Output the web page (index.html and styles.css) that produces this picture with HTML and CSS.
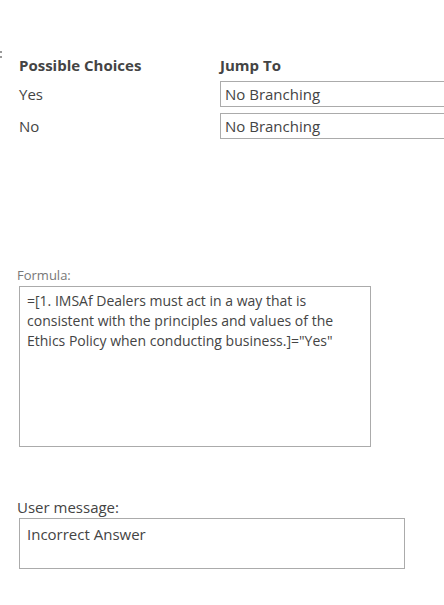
FILE: index.html
```html
<!DOCTYPE html>
<html>
<head>
<meta charset="utf-8">
<link rel="stylesheet" href="styles.css">
</head>
<body>
<div class="page">
  <span class="cut"></span>
  <div class="choices">
    <div class="head">Possible Choices</div>
    <div class="head">Jump To</div>
    <div class="choice">Yes</div>
    <div class="jump">No Branching</div>
    <div class="choice">No</div>
    <div class="jump">No Branching</div>
  </div>
  <div class="field formula">
    <div class="label">Formula:</div>
    <div class="box formula-box">=[1. IMSAf Dealers must act in a way that is consistent with the principles and values of the Ethics Policy when conducting business.]="Yes"</div>
  </div>
  <div class="field message">
    <div class="label dark">User message:</div>
    <div class="box message-box">Incorrect Answer</div>
  </div>
</div>
</body>
</html>
```
FILE: styles.css
```css
html, body {
  margin: 0;
  padding: 0;
  background: #fff;
}
body {
  width: 444px;
  height: 605px;
  overflow: hidden;
  font-family: "Open Sans", "Noto Sans", sans-serif;
  color: #444;
}
.page {
  position: relative;
  padding-top: 55px;
}
.cut {
  position: absolute;
  left: 0;
  top: 51px;
  width: 2px;
  height: 8px;
  background:
    linear-gradient(#999, #999) 0 0 / 2px 2px no-repeat,
    linear-gradient(#999, #999) 0 5px / 2px 2px no-repeat;
}
.choices {
  display: grid;
  grid-template-columns: 201px 240px;
  row-gap: 6px;
  padding-left: 19px;
  align-items: center;
}
.head {
  font-weight: 700;
  font-size: 15px;
  color: #444;
  height: 20px;
  line-height: 20px;
}
.choice {
  font-size: 15px;
  line-height: 26px;
}
.jump {
  height: 24px;
  border: 1px solid #ababab;
  border-right: none;
  font-size: 15px;
  line-height: 24px;
  padding-left: 4px;
  color: #444;
}
.field {
  padding-left: 17px;
}
.formula {
  margin-top: 127px;
}
.label {
  font-size: 13px;
  color: #777;
  line-height: 18px;
  margin-bottom: 2px;
}
.label.dark {
  color: #444;
  font-size: 15px;
}
.box {
  margin-left: 2px;
  border: 1px solid #ababab;
  box-sizing: border-box;
  padding: 4px 7px;
  font-size: 14px;
  line-height: 20px;
  color: #444;
}
.formula-box {
  width: 352px;
  height: 161px;
  padding-right: 30px;
}
.message {
  margin-top: 51px;
}
.message-box {
  width: 386px;
  height: 51px;
  padding-top: 5px;
  font-size: 15px;
}
```
